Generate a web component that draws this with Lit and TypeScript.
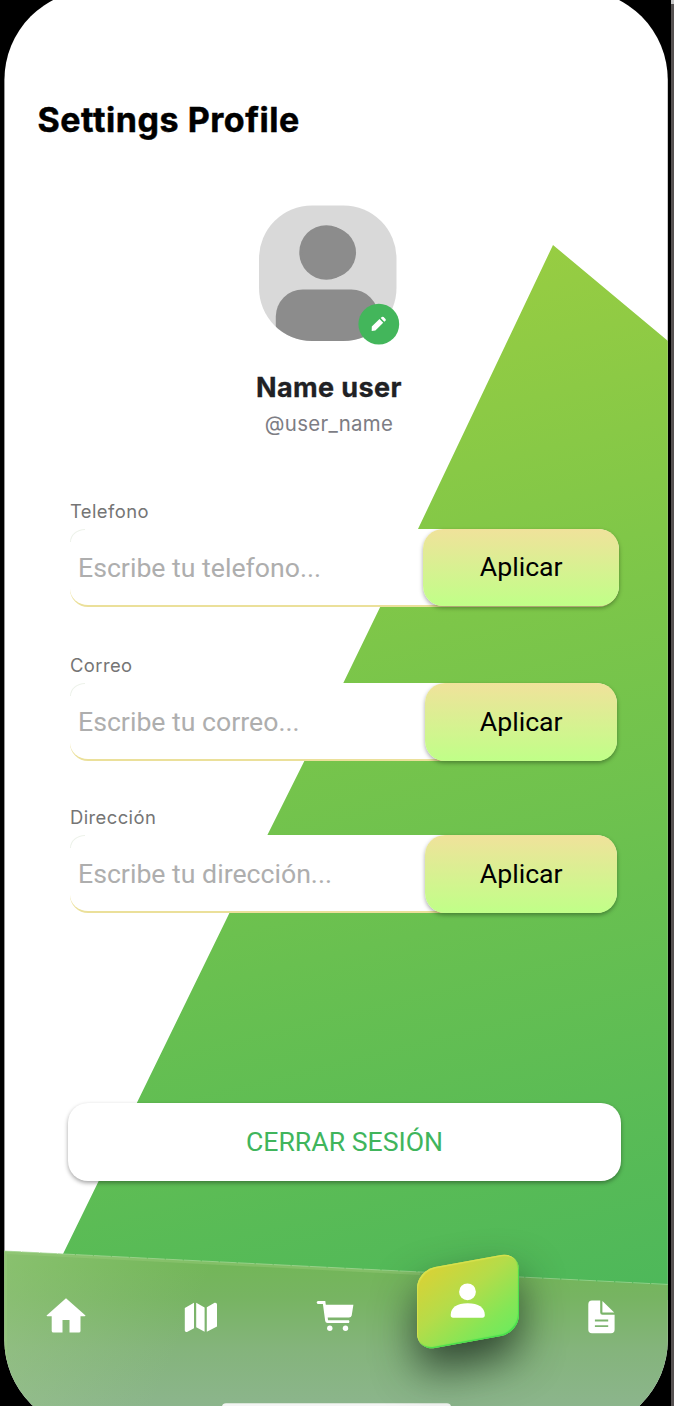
import { LitElement, html, css } from "lit";
import { customElement, property } from "lit/decorators.js";

@customElement("phone-backdrop")
class PhoneBackdrop extends LitElement {
  static styles = css`
    :host { display: block; }
    svg { display: block; }
  `;
  render() {
    return html`
      <svg width="674" height="1406" viewBox="0 0 674 1406">
        <defs>
          <clipPath id="screen"><rect x="4.4" y="-10" width="663.4" height="1440" rx="90" /></clipPath>
          <linearGradient id="leaf" gradientUnits="userSpaceOnUse" x1="390" y1="270" x2="640" y2="1290">
            <stop offset="0" stop-color="#98cd42" />
            <stop offset="0.3" stop-color="#80c748" />
            <stop offset="0.62" stop-color="#69c050" />
            <stop offset="1" stop-color="#4eb85a" />
          </linearGradient>
          <linearGradient id="bar" x1="0" y1="0" x2="0" y2="1">
            <stop offset="0.1" stop-color="#73b659" />
            <stop offset="0.3" stop-color="#77b462" />
            <stop offset="0.62" stop-color="#84b47b" />
            <stop offset="1" stop-color="#8cb58c" />
          </linearGradient>
          <linearGradient id="glow" x1="0" y1="0" x2="1" y2="0.1">
            <stop offset="0" stop-color="#a9d08e" stop-opacity="0.42" />
            <stop offset="0.32" stop-color="#a0cf86" stop-opacity="0" />
          </linearGradient>
        </defs>
        <rect width="674" height="1406" fill="#000" />
        <rect x="671" width="3" height="1406" fill="#565252" />
        <rect x="671" width="3" height="4" fill="#c8c8c8" />
        <g clip-path="url(#screen)">
          <rect width="674" height="1406" fill="#fff" />
          <path d="M553 245 L674 346 V1300 H40 L63 1254 L136.8 1103 L267.4 835 L343.3 683 L418 529 Z" fill="url(#leaf)" />
          <path d="M4 1251 L669 1285 V1406 H4 Z" fill="url(#bar)" />
          <path d="M4 1251 L669 1285 V1406 H4 Z" fill="url(#glow)" />
          <path d="M5.5 1406 V1252.5 L420 1273.5" fill="none" stroke="#9bcd7c" stroke-opacity="0.4" stroke-width="3" />
          <path d="M4 1251 L669 1284.5" fill="none" stroke="#a5d795" stroke-opacity="0.75" stroke-dasharray="17 1" />
          <rect x="222" y="1403.2" width="229" height="8" rx="4" fill="#f4f5f4" />
        </g>
      </svg>
    `;
  }
}

@customElement("profile-field")
class ProfileField extends LitElement {
  @property() label = "";
  @property() hint = "";
  @property({ type: Boolean }) wide = false;
  static styles = css`
    :host { display: block; }
    .label {
      height: 32px;
      font: 400 18.4px/28px Inter, sans-serif;
      color: #757575;
      letter-spacing: 0.42px;
    }
    .box {
      position: relative;
      box-sizing: border-box;
      display: flex;
      justify-content: space-between;
      height: 78px;
      width: 547px;
      background: #fff;
      border-radius: 18px 21px 21px 18px;
      border-bottom: 2px solid #ebe09a;
    }
    .box::before {
      content: "";
      position: absolute;
      left: 0;
      top: 0;
      width: 14px;
      height: 12px;
      border-top: 1px solid #edf2ea;
      border-left: 1px solid #edf2ea;
      border-top-left-radius: 15px 13px;
    }
    .wide { width: 549px; }
    .hint {
      padding-left: 8px;
      font: 400 26.67px/78px Roboto, sans-serif;
      color: #aeaeae;
    }
    .apply {
      width: 192.5px;
      height: 78px;
      border-radius: 20px;
      background: linear-gradient(#f0e29b, #c0ff88);
      box-shadow: 0 2px 4px rgba(0, 0, 0, 0.34);
      font: 400 26.67px/79px Roboto, sans-serif;
      color: #000;
      text-align: center;
    }
    .wide .apply { width: 196.5px; height: 76.5px; line-height: 77px; }
    .apply span { position: relative; left: 0.5px; }
  `;
  render() {
    return html`
      <div class="label">${this.label}</div>
      <div class="box ${this.wide ? "wide" : ""}">
        <div class="hint">${this.hint}</div>
        <div class="apply"><span>Aplicar</span></div>
      </div>
    `;
  }
}

@customElement("app-root")
class AppRoot extends LitElement {
  static styles = css`
    :host {
      display: block;
      position: relative;
      width: 674px;
      height: 1406px;
      overflow: hidden;
      background: #000;
    }
    .backdrop { position: absolute; inset: 0; }
    .page {
      position: relative;
      display: flex;
      flex-direction: column;
      height: 1406px;
    }
    h1 {
      margin: 95px 0 0 37.5px;
      font: 700 34px/50px Inter, sans-serif;
      letter-spacing: 0.55px;
      -webkit-text-stroke: 0.5px #000;
      color: #000;
      white-space: nowrap;
    }
    .user {
      margin: 58px 18px 0 0;
      display: flex;
      flex-direction: column;
      align-items: center;
    }
    .avatar { display: block; margin-left: 2px; }
    .name {
      margin: 23px 0 0 2px;
      font: 700 27px/36px Inter, sans-serif;
      letter-spacing: 0.4px;
      -webkit-text-stroke: 0.3px #202124;
      color: #202124;
      white-space: nowrap;
    }
    .handle {
      margin-left: 2px;
      font: 400 20.4px/36px Inter, sans-serif;
      letter-spacing: 0.3px;
      color: #7d7d84;
      white-space: nowrap;
    }
    .form {
      margin: 55px 0 0 70px;
      display: flex;
      flex-direction: column;
    }
    .mail { margin-top: 44px; }
    .address { margin-top: 42px; }
    .logout {
      margin: 190px 0 0 68px;
      width: 553px;
      height: 78px;
      border-radius: 20px;
      background: #fff;
      box-shadow: 0 2px 4px rgba(0, 0, 0, 0.36);
      font: 400 26.67px/78px Roboto, sans-serif;
      color: #40b55c;
      text-align: center;
    }
    nav {
      margin: 70px 6px 0 4px;
      display: grid;
      grid-template-columns: 123px 147px 122px 143px 125px;
      height: 130px;
      align-items: center;
      justify-items: center;
    }
    nav svg { display: block; fill: #fff; }
    nav > .low { margin-top: 2px; }
    .active {
      position: relative;
      width: 102px;
      height: 81px;
      top: -15px;
      display: grid;
      place-items: center;
    }
    .tile {
      position: absolute;
      inset: 0;
      transform: skewY(-10.3deg);
      border-radius: 18px;
      background: linear-gradient(148deg, #d8d236 5%, #b5dc49 42%, #84e656 76%, #69ec5e);
      box-shadow: 0 22px 42px 0 rgba(28, 42, 32, 0.8), inset 1px 1.5px 1px #d8e24f, inset -1px -1.5px 1px #45df4b;
    }
    .active svg { position: relative; }
  `;
  render() {
    return html`
      <phone-backdrop class="backdrop"></phone-backdrop>
      <div class="page">
        <h1>Settings Profile</h1>
        <div class="user">
          <svg class="avatar" width="146" height="144" viewBox="256 203 146 144">
            <defs>
              <clipPath id="face"><rect x="259" y="205.5" width="137.5" height="135.5" rx="53" /></clipPath>
            </defs>
            <g clip-path="url(#face)">
              <rect x="259" y="205" width="138" height="137" fill="#d9d9d9" />
              <rect x="299.3" y="225.2" width="54" height="54.5" rx="27" fill="#8c8c8c" />
              <rect x="302" y="227" width="54" height="51" rx="25.5" fill="#8c8c8c" />
              <rect x="275.8" y="289.5" width="102.5" height="80" rx="27" fill="#8c8c8c" />
            </g>
            <circle cx="378.8" cy="324.1" r="20.4" fill="#43b65b" />
            <path fill="#fff" d="M371.8 326.6 L379.5 319.1 L383.2 322.7 L375.4 330.5 L371.7 331 Z M380.7 318 L381.8 317 Q382.7 316.4 383.6 317 L385.5 318.9 Q386.3 319.9 385.5 320.7 L384.3 321.7 Z" />
          </svg>
          <div class="name">Name user</div>
          <div class="handle">@user_name</div>
        </div>
        <div class="form">
          <profile-field label="Telefono" hint="Escribe tu telefono..." wide></profile-field>
          <profile-field class="mail" label="Correo" hint="Escribe tu correo..."></profile-field>
          <profile-field class="address" label="Dirección" hint="Escribe tu dirección..."></profile-field>
        </div>
        <div class="logout">CERRAR SESIÓN</div>
        <nav>
          <svg width="40" height="36" viewBox="45.5 1298 40 36">
            <path d="M65.5 1298.3 L85 1315.4 Q85 1316.2 84 1316.2 H80 V1331 Q80 1332.6 78.4 1332.6 H69 V1320 H62 V1332.6 H53 Q51.2 1332.6 51.2 1331 V1316.2 H47 Q46 1316.2 46.1 1315.4 Z" />
          </svg>
          <svg class="low" width="34" height="32" viewBox="184 1300.5 34 32">
            <path d="M184.8 1307.4 L194 1302.2 V1327.8 L187 1331.4 Q184.8 1331.8 184.8 1330 Z M196.2 1302.2 L204.6 1307 V1331.2 L196.2 1326.8 Z M206.8 1306.8 L214.6 1302.2 Q217 1301.8 217 1304 V1326 L206.8 1331.2 Z" />
          </svg>
          <svg width="38" height="32" viewBox="316.5 1300 38 32">
            <path d="M318.3 1301 H325.8 L326.3 1304.7 H353.9 L352.2 1315.5 Q351.7 1317.6 349.5 1317.6 H328.2 L328.5 1320.3 H349.4 Q350.4 1321.5 349.4 1323.1 H328 Q326 1323.1 325.7 1321 L323.4 1303.9 H318.3 Q316 1302.4 318.3 1301 Z" />
            <circle cx="330.3" cy="1328.3" r="2.7" /><circle cx="346" cy="1328.3" r="2.7" />
          </svg>
          <div class="active">
            <div class="tile"></div>
            <svg width="36" height="36" viewBox="450 1282.5 36 36">
              <circle cx="467.5" cy="1291.3" r="8.4" />
              <path d="M450.7 1314.5 C450.7 1307 457 1302.8 467.7 1302.8 S484.8 1307 484.8 1314.5 Q484.8 1317.2 482.4 1317.2 H453 Q450.7 1317.2 450.7 1314.5 Z" />
            </svg>
          </div>
          <svg class="low" width="28" height="34" viewBox="588 1299.5 28 34">
            <path fill-rule="evenodd" d="M592 1300 H600.2 V1312 Q600.2 1314.3 602.5 1314.3 H614.6 V1329 Q614.6 1332.8 611 1332.8 H592 Q588.3 1332.8 588.3 1329 V1304 Q588.3 1300 592 1300 Z M594.9 1319 V1320.9 H608.2 V1319 Z M594.9 1324.7 V1326.6 H608.2 V1324.7 Z M602.4 1300.4 L614.2 1312 H602.4 Z" />
          </svg>
        </nav>
      </div>
    `;
  }
}
